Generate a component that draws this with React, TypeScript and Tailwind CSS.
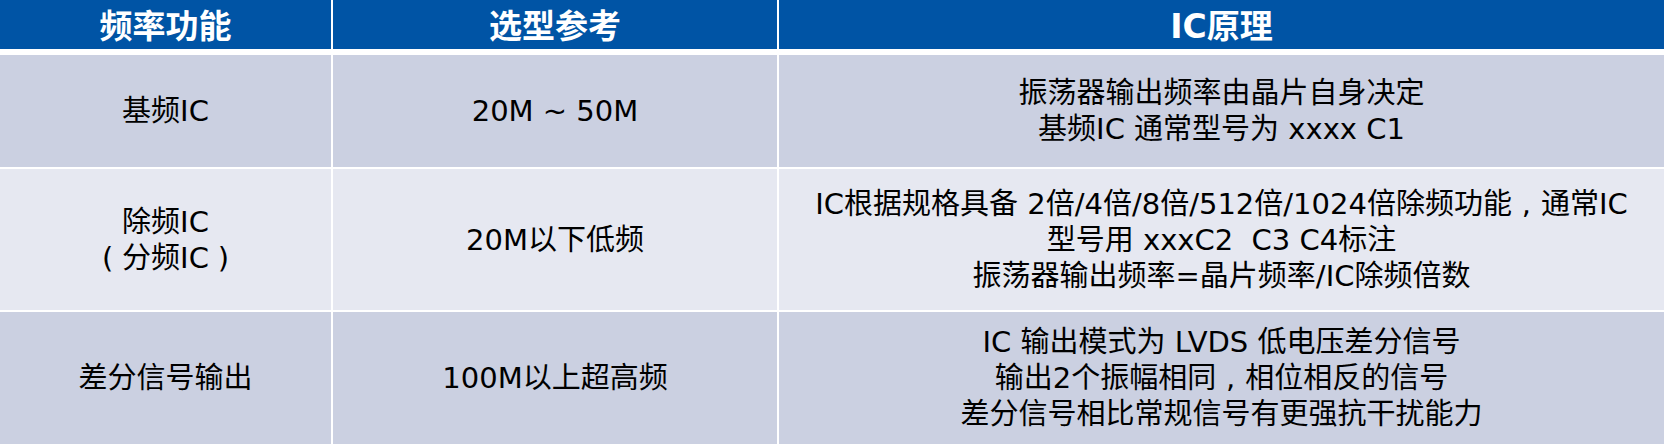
import React from "react";

const font = {
  fontFamily: '"DejaVu Sans", "Noto Sans CJK SC", sans-serif',
};

type Line = React.ReactNode;

const P = ({ c }: { c: string }) => (
  <span className="inline-block w-[1em] text-center">{c}</span>
);

const rows: { a: Line[]; b: Line[]; c: Line[]; h: string; bg: string }[] = [
  {
    a: ["基频IC"],
    b: ["20M ~ 50M"],
    c: ["振荡器输出频率由晶片自身决定", "基频IC 通常型号为 xxxx C1"],
    h: "h-[112px]",
    bg: "bg-[#cbd0e1]",
  },
  {
    a: [
      "除频IC",
      <>
        <P c="(" />
        分频IC
        <P c=")" />
      </>,
    ],
    b: ["20M以下低频"],
    c: [
      <>
        IC根据规格具备 2倍/4倍/8倍/512倍/1024倍除频功能
        <P c="," />
        通常IC
      </>,
      "型号用 xxxC2  C3 C4标注",
      "振荡器输出频率=晶片频率/IC除频倍数",
    ],
    h: "h-[141px]",
    bg: "bg-[#e6e8f1]",
  },
  {
    a: ["差分信号输出"],
    b: ["100M以上超高频"],
    c: [
      "IC 输出模式为 LVDS 低电压差分信号",
      <>
        输出2个振幅相同
        <P c="," />
        相位相反的信号
      </>,
      "差分信号相比常规信号有更强抗干扰能力",
    ],
    h: "h-[132px]",
    bg: "bg-[#cbd0e1]",
  },
];

function Cell({ lines, bg }: { lines: Line[]; bg: string }) {
  return (
    <div
      className={`${bg} flex flex-col items-center justify-center text-center text-[29px] leading-[36px] text-black whitespace-pre`}
    >
      {lines.map((l, i) => (
        <div key={i}>{l}</div>
      ))}
    </div>
  );
}

export default function App() {
  return (
    <div className="w-[1664px] h-[444px] bg-white flex flex-col overflow-hidden" style={font}>
      <div className="grid grid-cols-[331px_444px_885px] gap-x-[2px] h-[49px]">
        {["频率功能", "选型参考", "IC原理"].map((t) => (
          <div
            key={t}
            className="bg-[#0054a5] text-white font-bold text-[33px] leading-none flex items-center justify-center pt-[3px]"
          >
            {t}
          </div>
        ))}
      </div>
      <div className="mt-[6px] flex flex-col gap-y-[2px]">
        {rows.map((r, i) => (
          <div key={i} className={`grid grid-cols-[331px_444px_885px] gap-x-[2px] ${r.h}`}>
            <Cell lines={r.a} bg={r.bg} />
            <Cell lines={r.b} bg={r.bg} />
            <Cell lines={r.c} bg={r.bg} />
          </div>
        ))}
      </div>
    </div>
  );
}
